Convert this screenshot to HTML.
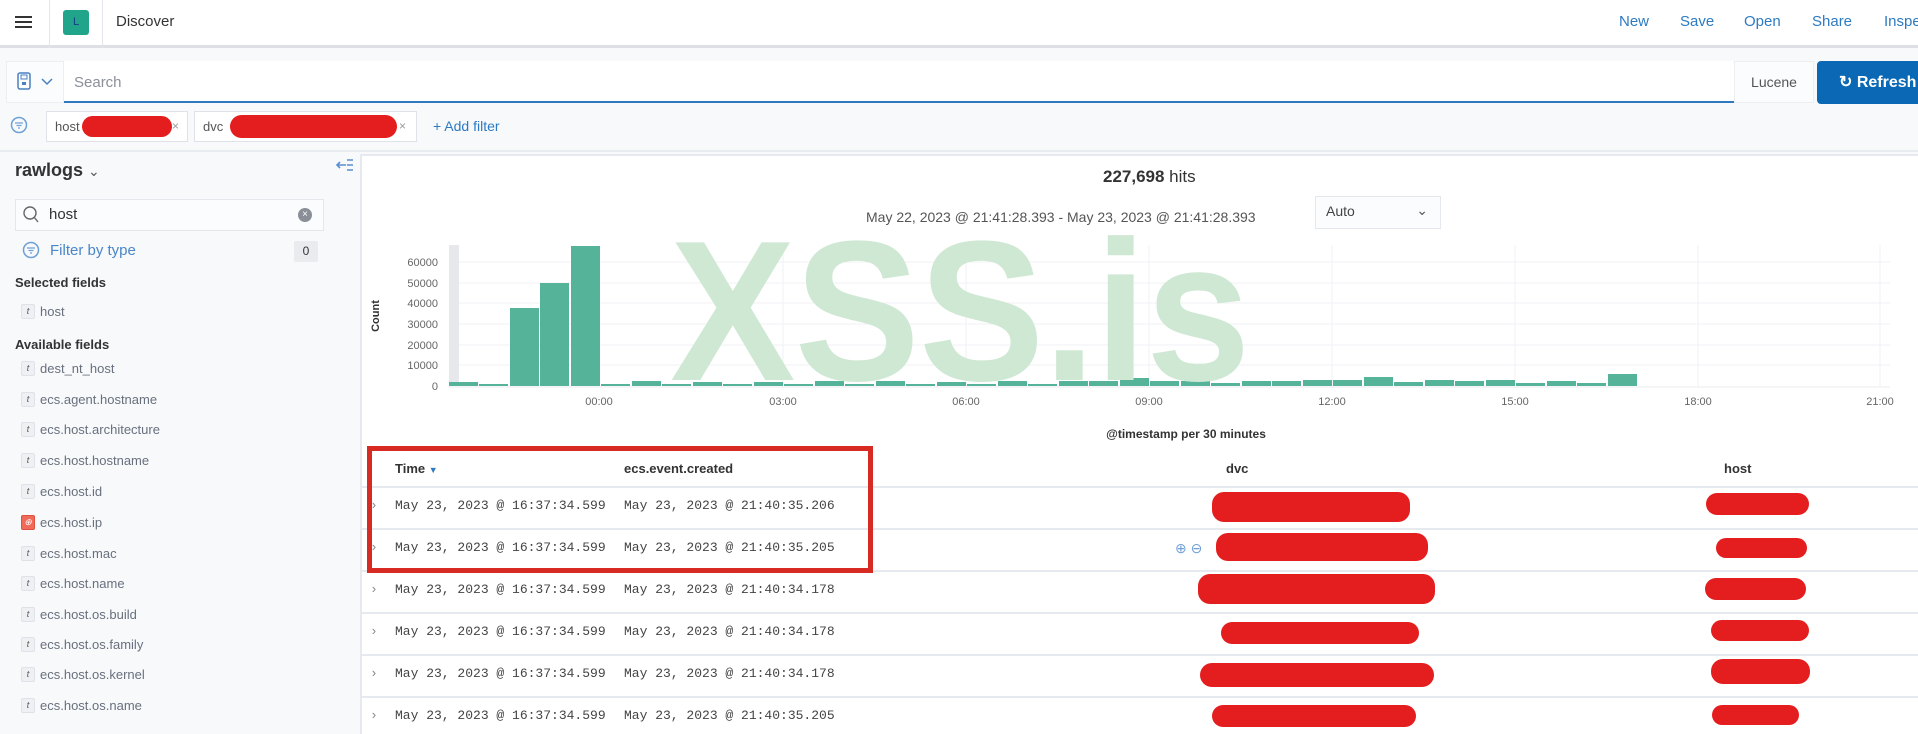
<!DOCTYPE html>
<html><head><meta charset="utf-8"><style>
*{margin:0;padding:0;box-sizing:border-box}
body{width:1918px;height:729px;overflow:hidden;background:#f7f9fb;font-family:"Liberation Sans",sans-serif;position:relative;color:#343741}
.a{position:absolute;white-space:nowrap}
.nav{color:#2d7ac1;font-size:15px;top:13px}
.fld{font-size:13px;color:#69707d;left:40px}
.ti{position:absolute;left:21px;width:14px;height:15px;background:#eef0f3;border:1px solid #dfe2e8;border-radius:2px;font-size:9px;color:#555;text-align:center;line-height:13px;font-style:italic}
.mono{font-family:"Liberation Mono",monospace;font-size:13px;color:#444}
.red{position:absolute;background:#e41e1e;border-radius:12px}
.hl{position:absolute;left:361px;right:0;height:2px;background:#e6e9ee}
</style></head><body>
<div class="a" style="left:0;top:0;width:1918px;height:48px;background:#fff;border-bottom:3px solid #dcdfe4"></div>
<div class="a" style="left:15px;top:16px;width:17px;height:2px;background:#333;box-shadow:0 5px 0 #333,0 10px 0 #333"></div>
<div class="a" style="left:49px;top:0;width:1px;height:48px;background:#e3e5ea"></div>
<div class="a" style="left:63px;top:10px;width:26px;height:25px;background:#20a58a;border-radius:3px;color:#1a3a8a;font-size:11px;text-align:center;line-height:25px">L</div>
<div class="a" style="left:102px;top:0;width:1px;height:48px;background:#e3e5ea"></div>
<div class="a" style="left:116px;top:13px;font-size:15px;color:#333">Discover</div>
<div class="a nav" style="left:1619px">New</div>
<div class="a nav" style="left:1680px">Save</div>
<div class="a nav" style="left:1744px">Open</div>
<div class="a nav" style="left:1812px">Share</div>
<div class="a nav" style="left:1884px">Inspect</div>
<div class="a" style="left:6px;top:61px;width:58px;height:42px;background:#fbfcfd;border:1px solid #eceef2"></div>
<svg class="a" style="left:17px;top:71px" width="40" height="22"><rect x="1" y="2" width="12" height="16" rx="2" fill="none" stroke="#4a7fc1" stroke-width="1.5"/><rect x="4" y="4" width="6" height="4" fill="none" stroke="#4a7fc1"/><rect x="5" y="11" width="4" height="3" fill="#4a7fc1"/><path d="M25 8l5 5 5-5" fill="none" stroke="#4a7fc1" stroke-width="1.5"/></svg>
<div class="a" style="left:64px;top:61px;width:1670px;height:42px;background:#fff;border-bottom:2px solid #2f79c0"></div>
<div class="a" style="left:74px;top:74px;font-size:15px;color:#8a8f99">Search</div>
<div class="a" style="left:1734px;top:61px;width:80px;height:42px;background:#fbfcfd;border:1px solid #eceef2;font-size:14px;color:#555;text-align:center;line-height:40px">Lucene</div>
<div class="a" style="left:1817px;top:61px;width:110px;height:43px;background:#0a68b4;border-radius:4px;color:#fff;font-size:16px;font-weight:bold;line-height:43px;padding-left:22px">&#8635; Refresh</div>
<div class="a" style="left:0;top:106px;width:1918px;height:46px;background:#f7f9fb;border-bottom:2px solid #e8ebf0"></div>
<svg class="a" style="left:10px;top:116px" width="18" height="18"><circle cx="9" cy="9" r="7.5" fill="none" stroke="#6fa0d6" stroke-width="1.5"/><path d="M5 7h8M6.5 9.5h5M8 12h2" stroke="#6fa0d6" stroke-width="1.3"/></svg>
<div class="a" style="left:46px;top:111px;width:142px;height:31px;background:#fff;border:1px solid #dfe2e8;font-size:13px;color:#555;line-height:29px;padding-left:8px">host</div>
<div class="red" style="left:82px;top:116px;width:90px;height:21px"></div>
<div class="a" style="left:172px;top:119px;font-size:12px;color:#999">×</div>
<div class="a" style="left:194px;top:111px;width:223px;height:31px;background:#fff;border:1px solid #dfe2e8;font-size:13px;color:#555;line-height:29px;padding-left:8px">dvc</div>
<div class="red" style="left:230px;top:115px;width:167px;height:23px"></div>
<div class="a" style="left:399px;top:119px;font-size:12px;color:#999">×</div>
<div class="a" style="left:433px;top:118px;font-size:14px;color:#2d7ac1">+ Add filter</div>
<div class="a" style="left:15px;top:160px;font-size:18px;font-weight:bold;color:#333">rawlogs <span style="font-weight:normal;font-size:14px;color:#555">&#8964;</span></div>
<svg class="a" style="left:335px;top:157px" width="20" height="16"><path d="M2 8h9M5 5L2 8l3 3" stroke="#5a8fd0" stroke-width="1.6" fill="none"/><path d="M12 3h6M12 8h6M12 13h6" stroke="#5a8fd0" stroke-width="1.5"/></svg>
<div class="a" style="left:15px;top:199px;width:309px;height:32px;background:#fbfcfd;border:1px solid #e4e7ec"></div>
<svg class="a" style="left:22px;top:205px" width="20" height="20"><circle cx="8" cy="8" r="6" fill="none" stroke="#666" stroke-width="1.4"/><path d="M12 12l4 5" stroke="#666" stroke-width="1.4"/></svg>
<div class="a" style="left:49px;top:206px;font-size:15px;color:#333">host</div>
<div class="a" style="left:298px;top:208px;width:14px;height:14px;border-radius:7px;background:#8a8e96;color:#fff;font-size:10px;text-align:center;line-height:14px">×</div>
<svg class="a" style="left:22px;top:241px" width="18" height="18"><circle cx="9" cy="9" r="7.5" fill="none" stroke="#6fa0d6" stroke-width="1.5"/><path d="M5 7h8M6.5 9.5h5M8 12h2" stroke="#6fa0d6" stroke-width="1.3"/></svg>
<div class="a" style="left:50px;top:242px;font-size:15px;color:#4a86c8">Filter by type</div>
<div class="a" style="left:294px;top:241px;width:24px;height:21px;background:#e9ebef;border-radius:2px;font-size:12px;text-align:center;line-height:21px;color:#333">0</div>
<div class="a" style="left:15px;top:275px;font-size:13px;font-weight:bold;color:#333">Selected fields</div>
<div class="ti" style="top:304px">t</div><div class="a fld" style="top:304px">host</div>
<div class="a" style="left:15px;top:337px;font-size:13px;font-weight:bold;color:#333">Available fields</div>
<div class="ti" style="top:361px">t</div><div class="a fld" style="top:361px">dest_nt_host</div>
<div class="ti" style="top:392px">t</div><div class="a fld" style="top:392px">ecs.agent.hostname</div>
<div class="ti" style="top:422px">t</div><div class="a fld" style="top:422px">ecs.host.architecture</div>
<div class="ti" style="top:453px">t</div><div class="a fld" style="top:453px">ecs.host.hostname</div>
<div class="ti" style="top:484px">t</div><div class="a fld" style="top:484px">ecs.host.id</div>
<div class="ti" style="top:515px;background:#f06a5a;border-color:#e05040;color:#fff">⊕</div><div class="a fld" style="top:515px">ecs.host.ip</div>
<div class="ti" style="top:546px">t</div><div class="a fld" style="top:546px">ecs.host.mac</div>
<div class="ti" style="top:576px">t</div><div class="a fld" style="top:576px">ecs.host.name</div>
<div class="ti" style="top:607px">t</div><div class="a fld" style="top:607px">ecs.host.os.build</div>
<div class="ti" style="top:637px">t</div><div class="a fld" style="top:637px">ecs.host.os.family</div>
<div class="ti" style="top:667px">t</div><div class="a fld" style="top:667px">ecs.host.os.kernel</div>
<div class="ti" style="top:698px">t</div><div class="a fld" style="top:698px">ecs.host.os.name</div>
<div class="a" style="left:360px;top:154px;width:1560px;height:580px;background:#fff;border-left:2px solid #e6e9ee;border-top:2px solid #e6e9ee"></div>
<div class="a" style="left:1103px;top:167px;font-size:17px;color:#333"><b>227,698</b> hits</div>
<div class="a" style="left:866px;top:209px;font-size:14px;color:#555">May 22, 2023 @ 21:41:28.393 - May 23, 2023 @ 21:41:28.393</div>
<div class="a" style="left:1315px;top:196px;width:126px;height:33px;border:1px solid #e4e7ec;background:#fbfcfd;font-size:14px;color:#444;padding:6px 0 0 10px">Auto<span style="position:absolute;right:12px;top:5px;color:#555">&#8964;</span></div>
<svg class="a" style="left:0;top:0" width="1918" height="450">
<g stroke="#f0f2f5" stroke-width="1">
<line x1="449" y1="262" x2="1890" y2="262"/><line x1="449" y1="283" x2="1890" y2="283"/><line x1="449" y1="303" x2="1890" y2="303"/><line x1="449" y1="324" x2="1890" y2="324"/><line x1="449" y1="345" x2="1890" y2="345"/><line x1="449" y1="365" x2="1890" y2="365"/>
<line x1="599" y1="245" x2="599" y2="386"/><line x1="783" y1="245" x2="783" y2="386"/><line x1="966" y1="245" x2="966" y2="386"/><line x1="1149" y1="245" x2="1149" y2="386"/><line x1="1332" y1="245" x2="1332" y2="386"/><line x1="1515" y1="245" x2="1515" y2="386"/><line x1="1698" y1="245" x2="1698" y2="386"/><line x1="1880" y1="245" x2="1880" y2="386"/>
</g>
<line x1="449" y1="387" x2="1890" y2="387" stroke="#e8ebef"/>
<rect x="449" y="245" width="10" height="141" fill="#e6e8eb"/>
<g font-family="Liberation Sans" font-size="11" fill="#666" text-anchor="end">
<text x="438" y="266">60000</text><text x="438" y="287">50000</text><text x="438" y="307">40000</text><text x="438" y="328">30000</text><text x="438" y="349">20000</text><text x="438" y="369">10000</text><text x="438" y="390">0</text>
</g>
<text x="379" y="316" transform="rotate(-90 379 316)" font-family="Liberation Sans" font-size="11" font-weight="bold" fill="#333" text-anchor="middle">Count</text>
<g fill="#54b399">
<rect x="449" y="382" width="29" height="4"/><rect x="479" y="384" width="29" height="2"/>
<rect x="510" y="308" width="29" height="78"/><rect x="540" y="283" width="29" height="103"/><rect x="571" y="246" width="29" height="140"/>
<rect x="601" y="384" width="29" height="2"/><rect x="632" y="381" width="29" height="5"/><rect x="662" y="384" width="29" height="2"/><rect x="693" y="382" width="29" height="4"/><rect x="723" y="384" width="29" height="2"/><rect x="754" y="382" width="29" height="4"/><rect x="784" y="384" width="29" height="2"/><rect x="815" y="381" width="29" height="5"/><rect x="845" y="384" width="29" height="2"/><rect x="876" y="381" width="29" height="5"/><rect x="906" y="384" width="29" height="2"/><rect x="937" y="382" width="29" height="4"/><rect x="967" y="384" width="29" height="2"/><rect x="998" y="381" width="29" height="5"/><rect x="1028" y="384" width="29" height="2"/><rect x="1059" y="381" width="29" height="5"/><rect x="1089" y="381" width="29" height="5"/><rect x="1120" y="378" width="29" height="8"/><rect x="1150" y="381" width="29" height="5"/><rect x="1181" y="381" width="29" height="5"/><rect x="1211" y="383" width="29" height="3"/><rect x="1242" y="381" width="29" height="5"/><rect x="1272" y="381" width="29" height="5"/><rect x="1303" y="380" width="29" height="6"/><rect x="1333" y="380" width="29" height="6"/><rect x="1364" y="377" width="29" height="9"/><rect x="1394" y="382" width="29" height="4"/><rect x="1425" y="380" width="29" height="6"/><rect x="1455" y="381" width="29" height="5"/><rect x="1486" y="380" width="29" height="6"/><rect x="1516" y="383" width="29" height="3"/><rect x="1547" y="381" width="29" height="5"/><rect x="1577" y="383" width="29" height="3"/><rect x="1608" y="374" width="29" height="12"/>
</g>
<g font-family="Liberation Sans" font-size="11" fill="#666" text-anchor="middle">
<text x="599" y="405">00:00</text><text x="783" y="405">03:00</text><text x="966" y="405">06:00</text><text x="1149" y="405">09:00</text><text x="1332" y="405">12:00</text><text x="1515" y="405">15:00</text><text x="1698" y="405">18:00</text><text x="1880" y="405">21:00</text>
</g>
<text x="1186" y="438" font-family="Liberation Sans" font-size="12" font-weight="bold" fill="#333" text-anchor="middle">@timestamp per 30 minutes</text>
</svg>
<div class="a" style="left:670px;top:212px;font-size:200px;font-weight:bold;color:#cfe8d3;letter-spacing:-1px;transform:scaleX(0.94);transform-origin:left top;line-height:1">XSS.is</div>
<div class="a" style="left:395px;top:461px;font-size:13px;font-weight:bold;color:#333">Time <span style="color:#2d7ac1;font-size:9px">&#9660;</span></div>
<div class="a" style="left:624px;top:461px;font-size:13px;font-weight:bold;color:#333">ecs.event.created</div>
<div class="a" style="left:1226px;top:461px;font-size:13px;font-weight:bold;color:#333">dvc</div>
<div class="a" style="left:1724px;top:461px;font-size:13px;font-weight:bold;color:#333">host</div>
<div class="hl" style="top:486px"></div><div class="hl" style="top:528px"></div><div class="hl" style="top:570px"></div><div class="hl" style="top:612px"></div><div class="hl" style="top:654px"></div><div class="hl" style="top:696px"></div>
<div class="a mono" style="left:370px;top:498px;color:#888">›</div><div class="a mono" style="left:395px;top:498px">May 23, 2023 @ 16:37:34.599</div><div class="a mono" style="left:624px;top:498px">May 23, 2023 @ 21:40:35.206</div>
<div class="a mono" style="left:370px;top:540px;color:#888">›</div><div class="a mono" style="left:395px;top:540px">May 23, 2023 @ 16:37:34.599</div><div class="a mono" style="left:624px;top:540px">May 23, 2023 @ 21:40:35.205</div>
<div class="a mono" style="left:370px;top:582px;color:#888">›</div><div class="a mono" style="left:395px;top:582px">May 23, 2023 @ 16:37:34.599</div><div class="a mono" style="left:624px;top:582px">May 23, 2023 @ 21:40:34.178</div>
<div class="a mono" style="left:370px;top:624px;color:#888">›</div><div class="a mono" style="left:395px;top:624px">May 23, 2023 @ 16:37:34.599</div><div class="a mono" style="left:624px;top:624px">May 23, 2023 @ 21:40:34.178</div>
<div class="a mono" style="left:370px;top:666px;color:#888">›</div><div class="a mono" style="left:395px;top:666px">May 23, 2023 @ 16:37:34.599</div><div class="a mono" style="left:624px;top:666px">May 23, 2023 @ 21:40:34.178</div>
<div class="a mono" style="left:370px;top:708px;color:#888">›</div><div class="a mono" style="left:395px;top:708px">May 23, 2023 @ 16:37:34.599</div><div class="a mono" style="left:624px;top:708px">May 23, 2023 @ 21:40:35.205</div>
<div class="a" style="left:367px;top:446px;width:506px;height:127px;border:5px solid #d62a22"></div>
<div class="a" style="left:1175px;top:540px;font-size:14px;color:#6fa0d6">⊕ ⊖</div>
<div class="red" style="left:1212px;top:492px;width:198px;height:30px"></div>
<div class="red" style="left:1216px;top:533px;width:212px;height:28px"></div>
<div class="red" style="left:1198px;top:574px;width:237px;height:30px"></div>
<div class="red" style="left:1221px;top:622px;width:198px;height:22px"></div>
<div class="red" style="left:1200px;top:663px;width:234px;height:24px"></div>
<div class="red" style="left:1212px;top:705px;width:204px;height:22px"></div>
<div class="red" style="left:1706px;top:493px;width:103px;height:22px"></div>
<div class="red" style="left:1716px;top:538px;width:91px;height:20px"></div>
<div class="red" style="left:1705px;top:578px;width:101px;height:22px"></div>
<div class="red" style="left:1711px;top:620px;width:98px;height:21px"></div>
<div class="red" style="left:1711px;top:659px;width:99px;height:25px"></div>
<div class="red" style="left:1712px;top:705px;width:87px;height:20px"></div>
</body></html>
